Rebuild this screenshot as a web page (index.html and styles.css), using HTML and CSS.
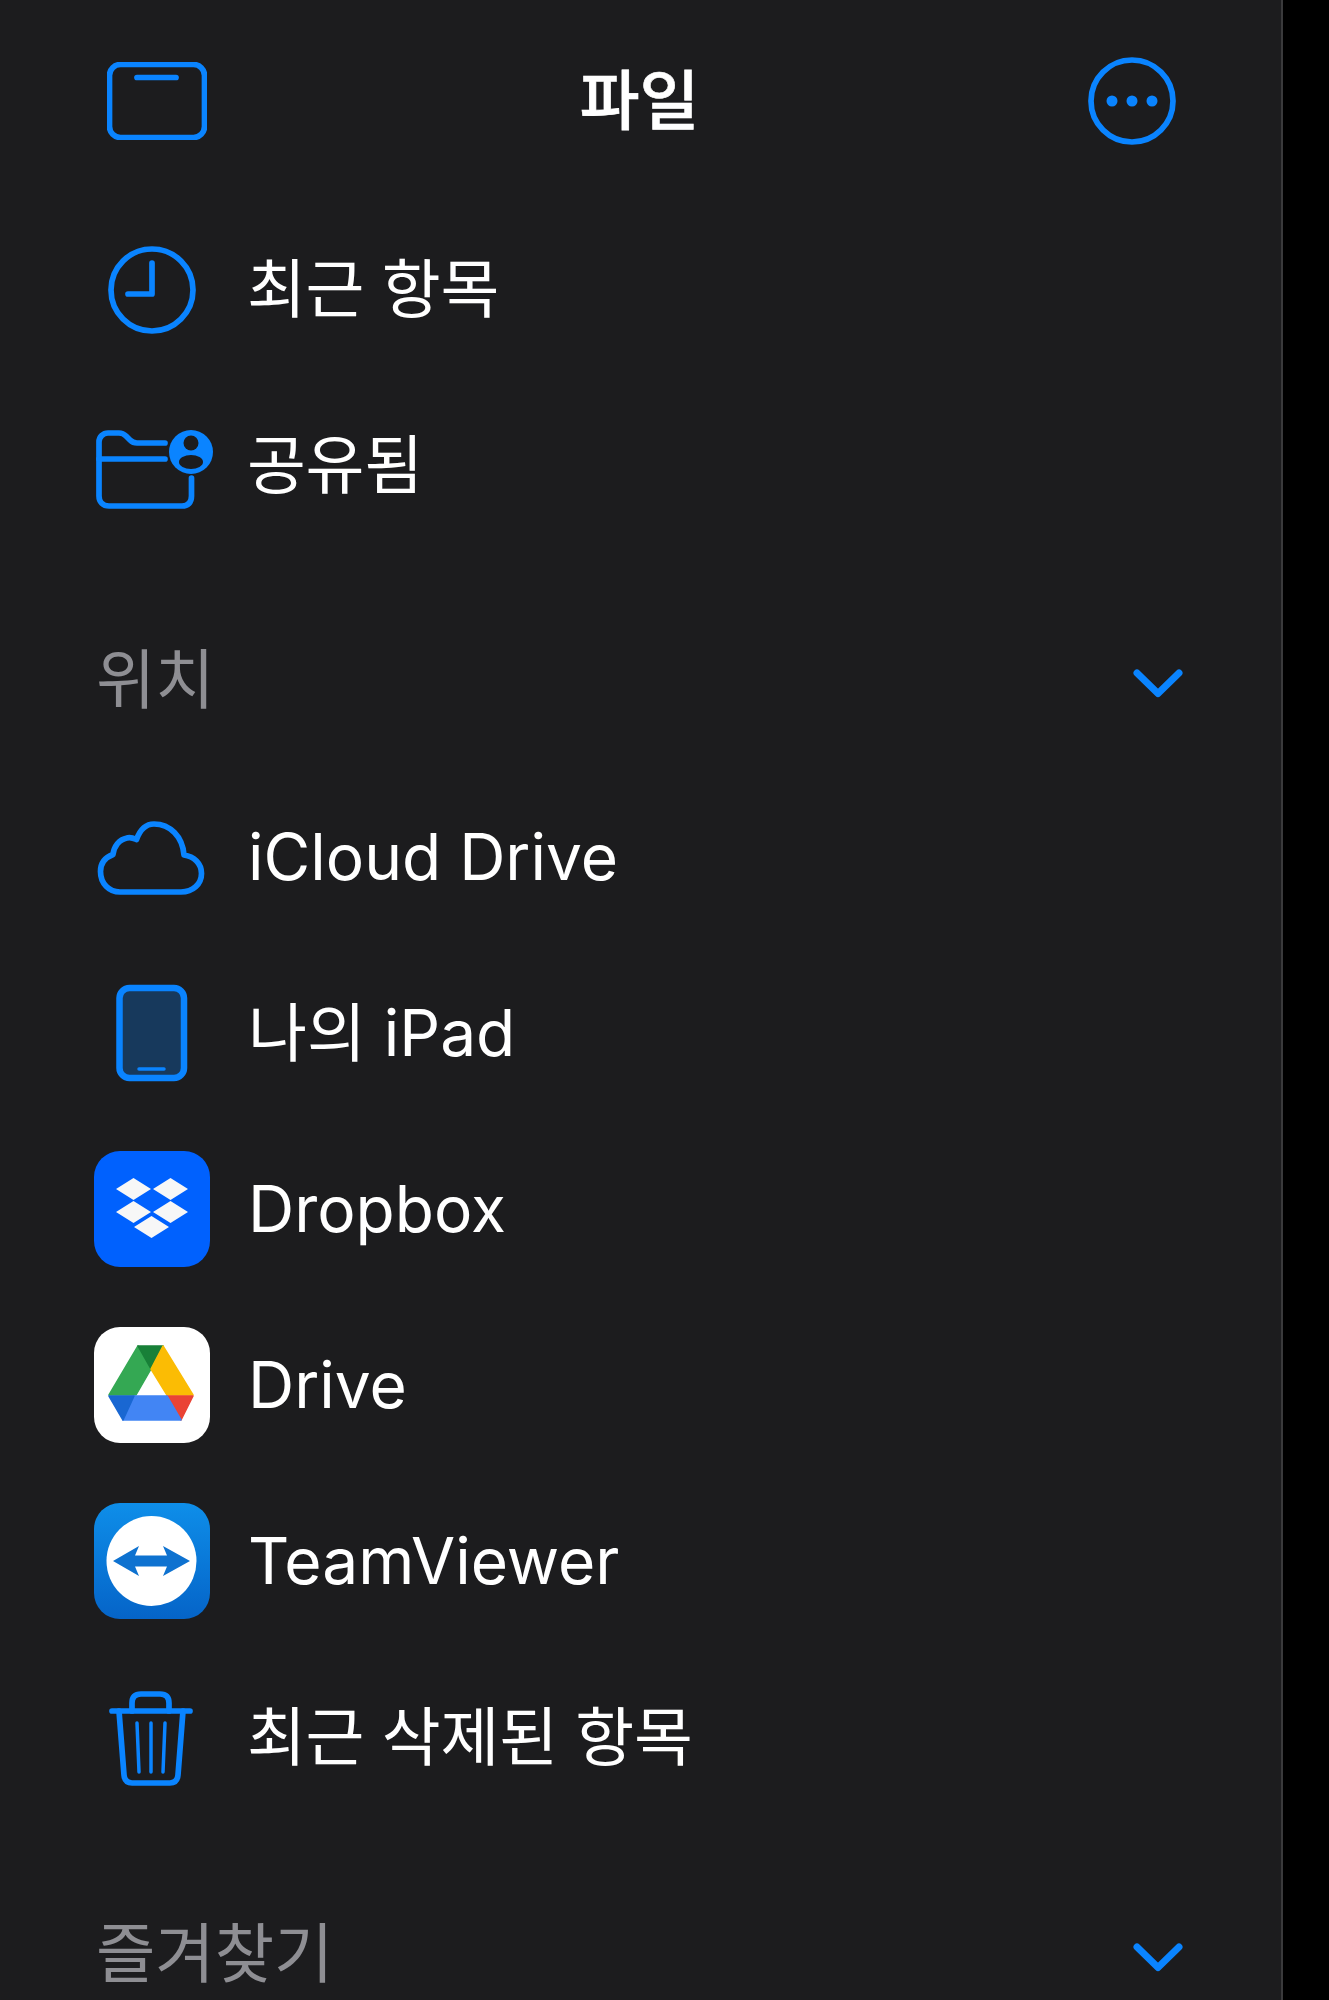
FILE: index.html
```html
<!DOCTYPE html>
<html lang="ko">
<head>
    <meta charset="UTF-8">
    <title>파일</title>
    <link rel="stylesheet" href="styles.css">
</head>
<body>
    <div class="sidebar">
        <!-- Header -->
        <div class="top-bar">
            <svg class="top-icon line-icon" width="100" height="78" viewBox="0 0 100 78">
                <rect x="2.500" y="2.500" width="95" height="73" rx="11"/>
                <path d="M30 15.500H69"/>
            </svg>
            <h1 class="title">파일</h1>
            <svg class="more-icon line-icon" width="88" height="88" viewBox="0 0 88 88">
                <circle cx="44" cy="44" r="41"/>
                <circle class="fill-icon" cx="24" cy="44" r="5.500"/>
                <circle class="fill-icon" cx="44" cy="44" r="5.500"/>
                <circle class="fill-icon" cx="64" cy="44" r="5.500"/>
            </svg>
        </div>

        <div class="row">
            <svg class="row-icon line-icon" viewBox="0 0 116 116">
                <circle cx="58" cy="59" r="41"/>
                <path d="M58 32V63H34"/>
            </svg>
            <span class="row-label ko-label">최근 항목</span>
        </div>
        <div class="row">
            <svg class="row-icon line-icon" viewBox="0 0 116 116">
                <path d="M71 36H43C40 36 38 35 36 33L32 29C30 27 28 26 25 26H14C9 26 5 30 5 35V89C5 95 9 99 15 99H88C94 99 97.500 95.500 97.500 89V71"/>
                <path d="M5 52H71"/>
                <circle class="fill-icon" cx="97" cy="45" r="22"/>
                <circle class="cut-out" cx="97" cy="36" r="7.500"/>
                <ellipse class="cut-out" cx="97" cy="55" rx="12" ry="7"/>
            </svg>
            <span class="row-label ko-label">공유됨</span>
        </div>

        <!-- Locations -->
        <div class="section-head">
            <span class="section-label">위치</span>
            <svg class="chevron" width="52" height="30" viewBox="0 0 52 30">
                <path d="M5 5L26 25.500L47 5"/>
            </svg>
        </div>
        <div class="row">
            <svg class="row-icon line-icon" viewBox="0 0 116 116">
                <path d="M26 93H87C99 93 107.500 85 107.500 74.500C107.500 64.500 100 57.500 90 56C88.500 37.500 76 25 60 25C52 25 46.500 29.500 42.500 40.500C39 39 36 38 33 39C25 40.500 20 47.500 19 55.500C11 58.500 6.500 64.500 6.500 72.500C6.500 84.500 15 93 26 93Z"/>
            </svg>
            <span class="row-label">iCloud Drive</span>
        </div>
        <div class="row">
            <svg class="row-icon line-icon" viewBox="0 0 116 116">
                <rect class="tablet" x="25.500" y="13" width="64.500" height="90" rx="10"/>
                <path class="thin" d="M45 94H70"/>
            </svg>
            <span class="row-label">나의 iPad</span>
        </div>
        <div class="row">
            <svg class="row-icon" viewBox="0 0 116 116">
                <rect width="116" height="116" rx="26" fill="#0061fe"/>
                <path d="M39.500 27L57 38L39.500 49L22 38Z M76.500 27L94 38L76.500 49L59 38Z M39.500 50L57 61L39.500 72L22 61Z M76.500 50L94 61L76.500 72L59 61Z M57.500 65L75 76L57.500 87L40 76Z" fill="#f7f7f7"/>
            </svg>
            <span class="row-label">Dropbox</span>
        </div>
        <div class="row">
            <svg class="row-icon drive-icon" viewBox="0 0 116 116">
                <rect width="116" height="116" rx="26" fill="#fff"/>
                <path d="M44 19L57 42L42 68H15Z" fill="#34a853" stroke="#34a853"/>
                <path d="M44 19H69L57 42Z" fill="#188038" stroke="#188038"/>
                <path d="M69 19L99 68H73L57 42Z" fill="#fbbc04" stroke="#fbbc04"/>
                <path d="M73 69H99L87 93Z" fill="#ea4335" stroke="#ea4335"/>
                <path d="M40 69H73L87 93H29Z" fill="#4285f4" stroke="#4285f4"/>
                <path d="M15 69H40L29 93Z" fill="#1967d2" stroke="#1967d2"/>
            </svg>
            <span class="row-label">Drive</span>
        </div>
        <div class="row">
            <svg class="row-icon" viewBox="0 0 116 116">
                <defs>
                    <linearGradient id="tvBack" x1="0" y1="0" x2="0" y2="1">
                        <stop offset="0" stop-color="#0e8ee9"/>
                        <stop offset="1" stop-color="#0564c8"/>
                    </linearGradient>
                </defs>
                <rect width="116" height="116" rx="26" fill="url(#tvBack)"/>
                <circle cx="57.500" cy="58" r="45" fill="#fff"/>
                <path d="M19 58L45 43L41 52.500H73L69 43L96 58L69 73L73 63.500H41L45 73Z" fill="#0e72d0"/>
            </svg>
            <span class="row-label">TeamViewer</span>
        </div>
        <div class="row">
            <svg class="row-icon line-icon" viewBox="0 0 116 116">
                <path d="M18 32H96"/>
                <path d="M38 32V24C38 18 41 15 47 15H66C72 15 75 18 75 24V32"/>
                <path d="M25 32L30 96C30.500 101 33 104 38 104H76C81 104 83.500 101 84 96L89 32"/>
                <path class="thin" d="M43 44L45 93M57 44V93M71 44L69 93"/>
            </svg>
            <span class="row-label ko-label">최근 삭제된 항목</span>
        </div>

        <!-- Favorites -->
        <div class="section-head section-last">
            <span class="section-label">즐겨찾기</span>
            <svg class="chevron" width="52" height="30" viewBox="0 0 52 30">
                <path d="M5 5L26 25.500L47 5"/>
            </svg>
        </div>
    </div>
</body>
</html>
```

FILE: styles.css
```css
html, body { margin: 0; padding: 0; background: #000; }
body { font-family: Inter, "Noto Sans CJK KR", sans-serif; }

.sidebar { width: 1281px; height: 2000px; background: #1c1c1e; border-right: 2px solid #3a3a3c; overflow: hidden; }

.top-bar { height: 199px; padding: 2px 105px 0 107px; display: flex; align-items: flex-start; justify-content: space-between; }
.top-icon { flex: none; margin-top: 60px; }
.more-icon { flex: none; margin-top: 55px; }
.title { margin: 62px 16px 0 0; color: #fff; font-size: 65px; line-height: 1; font-weight: 500; -webkit-text-stroke: 0.6px #fff; font-family: "Noto Sans CJK KR", sans-serif; }

.row { height: 176px; padding-left: 94px; display: flex; align-items: center; gap: 38px; }
.row-icon { width: 116px; height: 116px; flex: none; overflow: visible; }
.row-label { color: #fff; font-size: 64px; line-height: 1; font-weight: 400; white-space: nowrap; }
.ko-label { letter-spacing: -0.3px; margin-left: -1px; }

.section-head { height: 176px; margin-top: 39px; margin-bottom: 1px; padding: 0 97px 0 96px; display: flex; align-items: center; justify-content: space-between; }
.section-last { margin-top: 41px; }
.section-label { color: #8e8e93; font-size: 64.500px; line-height: 1; white-space: nowrap; }

.line-icon { fill: none; stroke: #0a84ff; stroke-width: 5.700; stroke-linecap: round; stroke-linejoin: round; }
.fill-icon { fill: #0a84ff; stroke: none; }
.cut-out { fill: #1c1c1e; stroke: none; }
.tablet { fill: #17395c; stroke-width: 6.500; }
.thin { stroke-width: 3.500; }
.drive-icon path { stroke-width: 1.500; stroke-linejoin: round; }

.chevron { flex: none; margin-top: 6px; fill: none; stroke: #0a84ff; stroke-width: 7; stroke-linecap: round; stroke-linejoin: round; }
```
